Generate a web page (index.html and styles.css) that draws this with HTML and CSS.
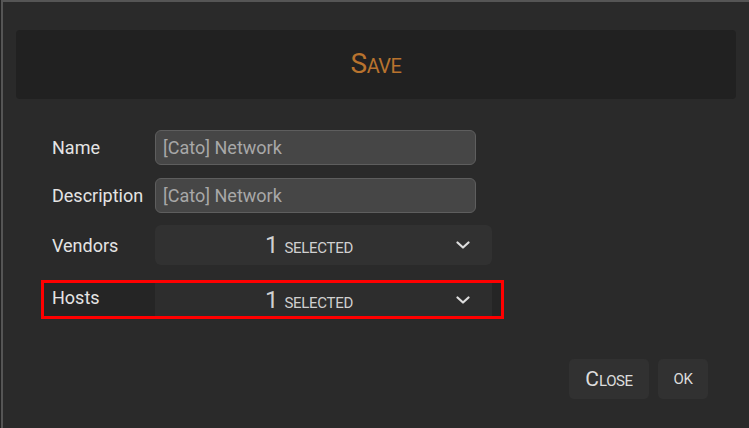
FILE: index.html
```html
<html lang="en">
<head>
    <meta charset="UTF-8">
    <title>Save</title>
    <link rel="stylesheet" href="styles.css">
</head>
<body>
    <div class="dialog">
        <header class="dialog-header">
            <h1>S<span class="sc">ave</span></h1>
        </header>
        <div class="form">
            <div class="row">
                <label>Name</label>
                <input type="text" value="[Cato] Network">
            </div>
            <div class="row row-desc">
                <label>Description</label>
                <input type="text" value="[Cato] Network">
            </div>
            <div class="row row-vendors">
                <label>Vendors</label>
                <div class="select">
                    <span class="select-text"><b>1</b> <span class="sc">selected</span></span>
                    <svg class="chevron" viewBox="0 0 14 8"><path d="M1.5 1.5 L7 6.5 L12.5 1.5"/></svg>
                </div>
            </div>
            <div class="row row-hosts">
                <label>Hosts</label>
                <div class="select">
                    <span class="select-text"><b>1</b> <span class="sc">selected</span></span>
                    <svg class="chevron" viewBox="0 0 14 8"><path d="M1.5 1.5 L7 6.5 L12.5 1.5"/></svg>
                </div>
            </div>
        </div>
        <div class="actions">
            <button class="btn-close">C<span class="sc">lose</span></button>
            <button class="btn-ok"><span class="sc">ok</span></button>
        </div>
    </div>
</body>
</html>
```
FILE: styles.css
```css
body {
    margin: 0;
    background-color: #222;
    font-family: Roboto, 'Liberation Sans', sans-serif;
    color: #e4e4e4;
}
.sc {
    text-transform: uppercase;
}
.dialog {
    box-sizing: border-box;
    margin-left: 1px;
    height: 428px;
    background-color: #2a2a2a;
    border-top: 2px solid #555;
    border-left: 2px solid #555;
    padding: 28px 13px 0 13px;
}
.dialog-header {
    background-color: #212121;
    border-radius: 4px;
    height: 69px;
    display: flex;
    align-items: center;
    justify-content: center;
}
.dialog-header h1 {
    margin: 0 0 3px 0;
    font-size: 28px;
    font-weight: normal;
    color: #b8732e;
    letter-spacing: -0.5px;
}
.dialog-header .sc {
    font-size: 20px;
}
.form {
    margin-top: 31px;
    padding-left: 36px;
}
.row {
    display: flex;
    align-items: center;
}
.row label {
    width: 103px;
    font-size: 18px;
    flex-shrink: 0;
}
.row input {
    box-sizing: border-box;
    width: 321px;
    height: 35px;
    padding: 0 7px;
    background-color: #464646;
    border: 1px solid #5e5e5e;
    border-radius: 6px;
    color: #a8a8a8;
    font-family: Roboto, 'Liberation Sans', sans-serif;
    font-size: 18px;
}
.row-desc {
    margin-top: 13px;
}
.row-vendors {
    margin-top: 12px;
}
.select {
    box-sizing: border-box;
    width: 337px;
    height: 40px;
    display: flex;
    align-items: center;
    background-color: #313131;
    border-radius: 6px;
    color: #d0d0d0;
}
.select-text {
    flex: 1;
    text-align: center;
    font-size: 24px;
}
.select-text b {
    font-weight: normal;
}
.select-text .sc {
    font-size: 15px;
    letter-spacing: -0.3px;
}
.chevron {
    width: 14px;
    height: 8px;
    margin-left: -7px;
    margin-right: 22px;
    fill: none;
    stroke: #dedede;
    stroke-width: 2.2;
    stroke-linecap: round;
    stroke-linejoin: round;
}
.row-hosts {
    margin-top: 15px;
    margin-left: -11px;
    width: 440px;
    padding: 0 9px 0 8px;
    border: 3px solid #f00;
    background-color: #252525;
}
.row-hosts label {
    margin-top: -4px;
}
.row-hosts .select {
    height: 33px;
    border-radius: 0;
    background-color: #2d2d2d;
}
.actions {
    display: flex;
    justify-content: flex-end;
    gap: 9px;
    margin-top: 40px;
    padding-right: 28px;
}
.actions button {
    height: 40px;
    padding: 0;
    background-color: #313131;
    border: none;
    border-radius: 5px;
    color: #dcdcdc;
    font-family: Roboto, 'Liberation Sans', sans-serif;
    font-size: 21px;
}
.actions .sc {
    font-size: 15px;
    letter-spacing: -0.4px;
}
.btn-close {
    width: 80px;
}
.btn-ok {
    width: 50px;
}
```
